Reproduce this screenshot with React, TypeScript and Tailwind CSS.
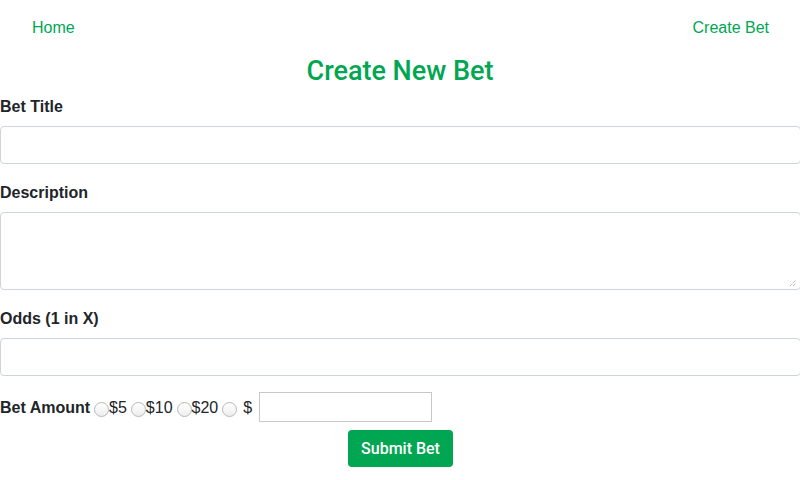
import React from "react";

const Radio = () => (
  <span className="inline-block w-[15px] h-[15px] rounded-full border border-[#b8b8b8] bg-gradient-to-b from-white to-[#eeeeee] ml-[4px] mt-[3px] shrink-0" />
);

export default function App() {
  return (
    <div className="w-[800px] min-h-[480px] bg-white text-[#212529] text-[16px] leading-[24px] font-['Liberation_Sans',Arial,sans-serif] overflow-hidden">
      <nav className="flex justify-between items-center px-[16px] py-[8px]">
        <a className="px-[16px] py-[8px] text-[#00a651]">Home</a>
        <a className="px-[15px] py-[8px] text-[#00a651]">Create Bet</a>
      </nav>
      <h2 className="text-center text-[27px] leading-[31px] font-medium font-['Roboto',Arial,sans-serif] text-[#00a651] mb-[7px]">
        Create New Bet
      </h2>
      <form className="flex flex-col">
        <div className="mb-[16px]">
          <label className="block font-bold mb-[8px] pt-[1px] leading-[23px]">Bet Title</label>
          <div className="w-[801px] h-[38px] border border-[#ced4da] rounded-[4px]" />
        </div>
        <div className="mb-[16px]">
          <label className="block font-bold mb-[8px] pt-[1px] leading-[23px]">Description</label>
          <div className="relative w-[801px] h-[78px] border border-[#ced4da] rounded-[4px]">
            <svg className="absolute right-[3px] bottom-[2px]" width="8" height="8" viewBox="0 0 8 8">
              <line x1="1" y1="7" x2="7" y2="1" stroke="#777" strokeWidth="0.8" strokeDasharray="1 1" />
              <line x1="4" y1="7" x2="7" y2="4" stroke="#777" strokeWidth="0.8" strokeDasharray="1 1" />
            </svg>
          </div>
        </div>
        <div className="mb-[16px]">
          <label className="block font-bold mb-[8px] pt-[1px] leading-[23px]">Odds (1 in X)</label>
          <div className="w-[801px] h-[38px] border border-[#ced4da] rounded-[4px]" />
        </div>
        <div className="flex items-center h-[30px] pt-[2px]">
          <span className="font-bold">Bet Amount</span>
          <Radio />
          <span>$5</span>
          <Radio />
          <span>$10</span>
          <Radio />
          <span>$20</span>
          <Radio />
          <span className="ml-[6px]">$</span>
          <div className="ml-[7px] w-[173px] h-[30px] border border-[#c8c8c8] -mt-[2px]" />
        </div>
        <div className="flex justify-center mt-[8px]">
          <button type="button" className="ml-[1px] w-[105px] h-[37px] bg-[#00a651] text-white font-medium font-['Roboto',Arial,sans-serif] rounded-[4px] text-[16px]">
            Submit Bet
          </button>
        </div>
      </form>
    </div>
  );
}
